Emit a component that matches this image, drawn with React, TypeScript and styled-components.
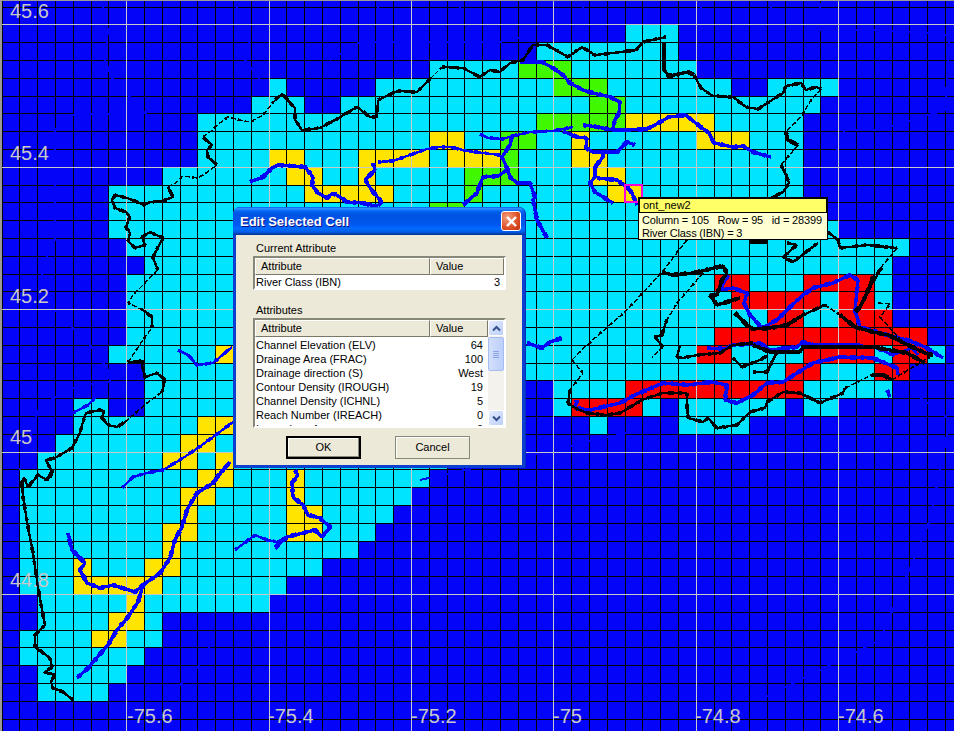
import React from 'react'
import styled, { createGlobalStyle } from 'styled-components'

const GlobalStyle = createGlobalStyle`
    html, body {
        margin: 0;
        padding: 0;
        background: #fff;
    }
`

const STEP = 17.8
const colX = (k: number) => Math.round(1.5 + STEP * k)
const rowY = (j: number) => Math.round(6.5 + STEP * j)

type Span = [number, number, number]

// [row, first column, last column]
const CYAN: Span[] = [
    [1, 35, 37], [2, 30, 37], [3, 24, 38], [4, 15, 15], [4, 21, 40], [4, 43, 46], [5, 14, 16], [5, 19, 45],
    [6, 11, 44], [7, 11, 44], [8, 11, 44], [9, 9, 44], [10, 6, 44], [11, 6, 44], [12, 6, 46], [13, 7, 50],
    [14, 8, 49], [15, 7, 49], [16, 7, 49], [17, 7, 49], [18, 7, 51], [19, 6, 52], [20, 8, 50], [21, 8, 28],
    [21, 31, 49], [22, 4, 5], [22, 8, 28], [22, 31, 36], [22, 38, 43], [22, 45, 46], [23, 4, 28], [23, 33, 33],
    [23, 38, 41], [24, 3, 28], [25, 2, 24], [26, 1, 23], [27, 1, 22], [28, 1, 21], [29, 1, 20], [30, 1, 19],
    [31, 1, 17], [32, 1, 15], [33, 2, 14], [34, 2, 8], [35, 1, 8], [36, 1, 7], [37, 2, 6], [38, 2, 5],
]
const YELLOW: Span[] = [
    [6, 35, 39], [7, 24, 25], [7, 32, 32], [7, 39, 41], [8, 15, 16], [8, 20, 23], [8, 25, 27], [8, 32, 33],
    [9, 16, 17], [9, 20, 20], [9, 33, 34], [10, 17, 21], [10, 34, 35], [19, 12, 12], [23, 11, 12], [24, 10, 11],
    [25, 9, 10], [25, 12, 12], [26, 11, 12], [26, 16, 16], [27, 10, 11], [27, 16, 16], [28, 10, 10], [28, 16, 17],
    [29, 9, 10], [29, 16, 17], [30, 9, 9], [31, 4, 4], [31, 8, 9], [32, 4, 8], [33, 7, 7], [34, 6, 7], [35, 5, 6],
]
const GREEN: Span[] = [
    [3, 29, 31], [4, 31, 33], [5, 33, 34], [6, 30, 34], [7, 28, 29], [8, 28, 28], [9, 26, 28], [10, 26, 26], [11, 24, 25],
]
const RED: Span[] = [
    [15, 40, 41], [15, 45, 48], [16, 41, 45], [16, 47, 48], [17, 43, 44], [17, 47, 49], [18, 40, 51], [19, 39, 40],
    [19, 45, 48], [19, 50, 51], [20, 44, 45], [20, 49, 50], [21, 35, 44], [22, 32, 35],
]

const CELL_LAYERS: { color: string, spans: Span[] }[] = [
    { color: '#00e4ff', spans: CYAN },
    { color: '#ffe400', spans: YELLOW },
    { color: '#40f800', spans: GREEN },
    { color: '#fc0000', spans: RED },
]

// breaks in the black grid, same colour as the water
const WATER_TRACES = [
    '102,3 108,30 105,60 112,78 145,113 100,114 75,114 55,130 55,240 40,270 55,310 90,345 108,370 110,382 80,385 40,405 20,470',
    '235,3 250,40 245,60 260,80',
    '330,60 360,42 500,42 530,35',
    '378,3 378,40', '460,3 460,40', '583,3 583,30', '700,3 703,20', '770,3 775,20',
    '820,3 820,30 880,30 950,35 945,110 880,130 845,130 830,165',
    '910,390 950,420 930,520 880,640 760,700',
    '213,640 198,667 182,683 163,700',
    '420,480 640,430',
]

// [points, stroke width]
const BOUNDARIES: [string, number][] = [
    ['73,700 63,692 53,688 51,682 55,674 44,673 52,667 50,658 42,652 35,647 35,635 45,625 42,610 38,587 33,553 28,527 23,497 22,482 24,478 28,487 38,475 47,480 52,470 50,478 52,472 46,460 55,458 72,448 80,433 82,425 86,413 100,410 104,411 102,418 108,425 117,427 125,422', 2],
    ['125,422 147,403 162,392', 1],
    ['162,392 165,380 157,373 145,377 142,365 144,361 128,362', 2],
    ['128,362 143,340 152,328', 1],
    ['152,328 152,317 143,310', 2],
    ['143,310 128,303 133,295 158,270', 1],
    ['158,270 153,258 155,253 162,240 163,238 150,232 142,237 145,245 135,248 128,241 130,233 126,227 130,217 126,212 115,208 112,200 115,195 127,198 137,202 144,205 150,202 163,201 173,197 168,187', 2],
    ['168,187 177,182 183,176 197,178 205,174 213,168 217,165', 1],
    ['217,165 208,157 207,150 212,145 203,137', 2],
    ['203,137 210,132 220,123 228,117 240,120 250,122 263,115 275,100', 1],
    ['275,100 282,94 295,108 295,120 302,130 320,128 335,120 357,107 370,117 377,117 378,100', 2],
    ['378,100 398,91 417,92 430,79', 2],
    ['430,79 442,67', 1],
    ['442,67 463,68 480,77 490,70 500,72 510,63 523,60 533,45 547,45 568,57 582,47 595,55 613,53 637,50', 2],
    ['636,50 643,42 666,37', 2],
    ['664,42 664,50 664,70 669,76 688,72 694,75', 3],
    ['694,75 701,88 713,96 733,97 746,107 758,109 783,93 786,86 801,83 806,90 816,87 821,89', 2],
    ['821,89 811,100 801,117 786,132', 1],
    ['786,132 788,140 798,145', 3],
    ['798,145 781,165', 1],
    ['781,165 786,175 789,183 783,192 773,197 760,205', 2],
    // east side, below the tip
    ['687,240 662,272 627,310 587,345 572,360', 1],
    ['572,360 583,373 570,390', 1],
    ['570,390 568,403 575,408 587,413 607,415 620,413 642,400 663,393 687,393', 2],
    ['687,393 687,405 688,418 703,422 708,418 717,428 737,425 750,412 765,408 767,402 783,392 800,393 820,403', 2],
    ['820,403 843,393 845,388', 2],
    ['845,388 872,375', 1],
    ['872,375 883,375 892,380', 3],
    ['892,380 908,370 933,355', 1],
    ['662,272 672,275 693,273 723,266 727,273 722,280 717,295 710,295 717,305 740,298', 3],
    ['703,273 677,303 667,320', 1],
    ['667,320 665,325 662,335 655,337 663,347', 2],
    ['663,347 652,357', 1],
    ['680,345 677,357 683,358 697,355 720,353 733,345 753,343', 2],
    ['733,358 742,367 760,360 768,355', 2],
    ['753,372 767,372 777,352', 2],
    ['753,345 770,352 800,352 803,347 857,347 873,347 890,350 907,353 925,363', 3],
    ['735,313 747,325 753,329 770,328 787,325 803,315', 3],
    ['803,315 825,305', 2],
    ['825,305 840,315', 1],
    ['840,315 855,327 873,332 888,335 908,345 925,353 933,355', 3],
    ['882,268 872,283 865,297 860,307', 2],
    ['878,303 890,304 880,317 905,345', 1],
    ['750,242 768,242', 3],
    ['787,243 797,245 783,257 793,262 818,243', 2],
    ['828,232 838,240 840,248 867,245 897,248', 2],
    ['897,248 873,277', 1],
    ['873,277 867,293 860,307 855,312', 3],
]

const RIVERS: [string, number][] = [
    ['520,62 542,62 553,68 563,75 570,83 583,90 593,93 610,97 620,102 619,113 615,120 613,128', 3],
    ['480,134 488,138 503,139 512,136 530,132 553,131 573,127', 2],
    ['583,125 597,127 613,130 627,130 647,129 653,126 669,117 686,115 698,125 709,133 714,143 733,147 743,146 753,152 771,157', 3],
    ['563,131 577,137 587,138 586,148 593,152 617,152 627,142 635,145', 3],
    ['603,152 603,157 595,167 595,177 590,183 595,192 603,197 613,203', 3],
    ['597,178 617,180 627,187 632,193 637,205', 3],
    ['250,182 263,177 272,168 278,165 293,166 305,167 313,177 312,185 318,193 327,198 333,193 340,197 347,202 363,203 378,207', 3],
    ['378,162 393,161 410,155 427,149 440,147 450,147 467,151 483,153 500,155', 2],
    ['373,163 375,170 365,180 373,192 382,202 378,206', 3],
    ['512,136 510,145 502,157 507,168 510,177 517,183 530,183 535,197 533,200 537,220 547,238', 3],
    ['507,170 498,176 483,177 479,187 477,193 463,205', 3],
    ['223,470 213,483 197,493 187,510 182,527 175,540 170,558 160,573 143,585 135,592 113,585 100,588 87,583 80,570 85,563 72,550 68,533', 3],
    ['143,585 138,602 128,617 117,630 108,645 101,653 88,668 77,678', 3],
    ['122,488 133,477 147,473 163,470 180,460 195,450 213,437 233,422', 2],
    ['217,477 230,462', 3],
    ['178,350 188,355 197,365 213,363 232,347', 2],
    ['73,413 88,405 95,398', 2],
    ['295,470 298,475 292,483 293,497 303,505 308,515 320,518 330,527 322,537 315,530 287,537 275,548', 3],
    ['235,550 255,535 267,540 277,542 287,537', 2],
    ['728,275 720,290 733,288 747,293 744,303 750,315 762,328', 3],
    ['762,328 777,320 787,310 803,295 813,288 833,283 850,275 858,280 855,310 860,327 887,335 907,340 925,347 943,358', 3],
    ['707,348 725,349 733,345 760,343 770,350 797,347 803,342 813,345 857,345', 3],
    ['857,345 873,347 893,355 912,348 918,355', 2],
    ['577,400 575,408 590,410 620,403 635,395 663,383 687,385 712,382 727,385 725,400 737,403 753,395 767,383 783,382 813,363 840,357 873,358 897,368 898,375', 3],
    ['527,343 542,348 550,342 562,338', 3],
    ['887,390 890,397', 3],
]

const LAT_LABELS: [string, number][] = [['45.6', 18], ['45.4', 160], ['45.2', 303], ['45', 444], ['44.8', 587]]
const LON_LABELS: [string, number][] = [['-75.6', 127], ['-75.4', 268], ['-75.2', 411], ['-75', 553], ['-74.8', 695], ['-74.6', 838]]

const ATTRIBUTES: [string, string][] = [
    ['Channel Elevation (ELV)', '64'],
    ['Drainage Area (FRAC)', '100'],
    ['Drainage direction (S)', 'West'],
    ['Contour Density (IROUGH)', '19'],
    ['Channel Density (ICHNL)', '5'],
    ['Reach Number (IREACH)', '0'],
    ['Impervious Area', '0'],
]

const isGraticule = (n: number, offset: number) => (n - offset) % 8 === 0

// a base line and a dashed heavier copy, so the trace looks blocky like the raster
const Traces: React.FC<{ lines: [string, number][], color: string }> = ({ lines, color }) => (
    <g fill="none" stroke={color} strokeLinejoin="bevel" shapeRendering="crispEdges">
        {lines.map(([points, width]) => (
            <React.Fragment key={points}>
                <polyline points={points} strokeWidth={width + 0.4} strokeDasharray={width === 1 ? '5 2' : undefined} />
                <polyline points={points} strokeWidth={width + 1.6} strokeDasharray={width === 1 ? '2 12' : '3 8 6 5'} />
            </React.Fragment>
        ))}
    </g>
)

const GridMap: React.FC = () => {
    const cols = Array.from({ length: 54 }, (_, k) => k)
    const rows = Array.from({ length: 41 }, (_, j) => j)

    return (
        <MapSvg width="954" height="731" viewBox="0 0 954 731">
            <rect x="0" y="0" width="954" height="731" fill="#0404f8" shapeRendering="crispEdges" />
            {CELL_LAYERS.map(layer => layer.spans.map(([row, from, to]) => (
                <rect
                    key={`${layer.color}-${row}-${from}`}
                    x={colX(from)}
                    y={rowY(row)}
                    width={colX(to + 1) - colX(from)}
                    height={rowY(row + 1) - rowY(row)}
                    fill={layer.color}
                    shapeRendering="crispEdges"
                />
            )))}
            <g stroke="#000" strokeWidth="1" shapeRendering="crispEdges">
                {cols.map(k => <line key={k} x1={colX(k) + 0.5} y1="0" x2={colX(k) + 0.5} y2="731" />)}
                {rows.map(j => <line key={j} x1="0" y1={rowY(j) + 0.5} x2="954" y2={rowY(j) + 0.5} />)}
            </g>
            <g fill="none" stroke="#0404f8" strokeWidth="2" shapeRendering="crispEdges">
                {WATER_TRACES.map(points => <polyline key={points} points={points} />)}
            </g>
            <g stroke="#c8c8c8" strokeWidth="1" shapeRendering="crispEdges">
                {cols.filter(k => isGraticule(k, 7)).map(k => <line key={k} x1={colX(k) + 0.5} y1="0" x2={colX(k) + 0.5} y2="731" />)}
                {rows.filter(j => isGraticule(j, 1)).map(j => <line key={j} x1="0" y1={rowY(j) + 0.5} x2="954" y2={rowY(j) + 0.5} />)}
            </g>
            <Traces lines={RIVERS} color="#0404f8" />
            <Traces lines={BOUNDARIES} color="#000" />
            <rect x="625" y="185" width="17" height="17" fill="none" stroke="#ff00d8" strokeWidth="2" shapeRendering="crispEdges" />
            <g fill="#c8c8c8" fontFamily="'Liberation Sans', Arial, sans-serif" fontSize="20">
                {LAT_LABELS.map(([label, y]) => <text key={label} x="10" y={y}>{label}</text>)}
                {LON_LABELS.map(([label, x]) => <text key={label} x={x} y="723">{label}</text>)}
            </g>
            <path d="M0 0H954V1H2V731H0Z" fill="#9a9a9a" shapeRendering="crispEdges" />
        </MapSvg>
    )
}

const ScrollArrow: React.FC<{ down?: boolean }> = ({ down }) => (
    <svg width="9" height="7" viewBox="0 0 9 7">
        <path d={down ? 'M1 1.5L4.5 5L8 1.5' : 'M1 5.5L4.5 2L8 5.5'} fill="none" stroke="#35508c" strokeWidth="2" />
    </svg>
)

export default function App() {
    return (
        <Screen>
            <GlobalStyle />
            <GridMap />

            <Tip>
                <TipTitle>ont_new2</TipTitle>
                <TipBody>
                    <TipLine>Column = 105   Row = 95   id = 28399</TipLine>
                    <TipLine>River Class (IBN) = 3</TipLine>
                </TipBody>
            </Tip>

            <Dialog>
                <TitleBar>
                    <Title>Edit Selected Cell</Title>
                    <CloseButton>
                        <svg width="13" height="13" viewBox="0 0 13 13">
                            <path d="M2 2L11 11M11 2L2 11" stroke="#fff" strokeWidth="2.4" />
                        </svg>
                    </CloseButton>
                </TitleBar>
                <Body>
                    <GroupLabel>Current Attribute</GroupLabel>
                    <ListFrame>
                        <HeaderRow>
                            <HeaderCell $width={175}>Attribute</HeaderCell>
                            <HeaderCell $width={74}>Value</HeaderCell>
                        </HeaderRow>
                        <Row $inset={4}>
                            <span>River Class (IBN)</span>
                            <span>3</span>
                        </Row>
                    </ListFrame>

                    <GroupLabel $top={13}>Attributes</GroupLabel>
                    <ListFrame $height={110}>
                        <ListColumn>
                            <HeaderRow>
                                <HeaderCell $width={175}>Attribute</HeaderCell>
                                <HeaderCell $width={58}>Value</HeaderCell>
                            </HeaderRow>
                            <Rows>
                                {ATTRIBUTES.map(([name, value]) => (
                                    <Row key={name} $inset={5}>
                                        <span>{name}</span>
                                        <span>{value}</span>
                                    </Row>
                                ))}
                            </Rows>
                        </ListColumn>
                        <ScrollBar>
                            <ScrollButton><ScrollArrow /></ScrollButton>
                            <ScrollTrack>
                                <ScrollThumb>
                                    <Grip /><Grip /><Grip /><Grip />
                                </ScrollThumb>
                            </ScrollTrack>
                            <ScrollButton><ScrollArrow down /></ScrollButton>
                        </ScrollBar>
                    </ListFrame>

                    <Buttons>
                        <PushButton $primary>OK</PushButton>
                        <PushButton>Cancel</PushButton>
                    </Buttons>
                </Body>
            </Dialog>
        </Screen>
    )
}

const Screen = styled.div`
    position: relative;
    width: 954px;
    height: 731px;
    overflow: hidden;
    font-family: "Liberation Sans", Arial, sans-serif;
    font-size: 11px;
    color: #000;
`

const MapSvg = styled.svg`
    display: block;
`

const Tip = styled.div`
    position: absolute;
    left: 638px;
    top: 197px;
    width: 190px;
    height: 43px;
    box-sizing: border-box;
    border: 1px solid #000;
    background: #ffffd2;
    display: flex;
    flex-direction: column;
`

const TipTitle = styled.div`
    height: 15px;
    flex: none;
    box-sizing: border-box;
    padding-left: 3px;
    line-height: 13px;
    overflow: hidden;
    background: #ffff66;
    border: 1px solid #000;
`

const TipBody = styled.div`
    padding: 1px 0 0 3px;
`

const TipLine = styled.div`
    height: 13px;
    line-height: 13px;
    white-space: pre;
    letter-spacing: -0.16px;
`

const Dialog = styled.div`
    position: absolute;
    left: 233px;
    top: 207px;
    width: 293px;
    height: 261px;
    box-sizing: border-box;
    display: flex;
    flex-direction: column;
    background: #0a3fd0;
    border-radius: 7px 7px 0 0;
    padding: 0 3px 3px 3px;
    border-right: 1px solid #0030b8;
`

const TitleBar = styled.div`
    height: 28px;
    margin: 0 -3px;
    padding: 0 4px 0 7px;
    flex: none;
    display: flex;
    align-items: center;
    justify-content: space-between;
    border-radius: 7px 7px 0 0;
    background: linear-gradient(#0058ee 0%, #3593ff 6%, #127dff 10%, #0262ee 16%, #0054e3 26%, #0055eb 56%, #005bf5 66%, #026afe 76%, #0062ef 86%, #0052d6 92%, #0040ab 96%, #003092 100%);
`

const Title = styled.span`
    font-family: "Liberation Sans", Arial, sans-serif;
    font-weight: 700;
    font-size: 13px;
    color: #fff;
    text-shadow: 1px 1px #0f1089;
`

const CloseButton = styled.div`
    width: 20px;
    height: 20px;
    box-sizing: border-box;
    display: flex;
    align-items: center;
    justify-content: center;
    border: 1px solid #fff;
    border-radius: 3px;
    background: radial-gradient(circle at 30% 30%, #f0a080, #e0552c 55%, #c0300f);
`

const Body = styled.div`
    flex: 1;
    min-height: 0;
    display: flex;
    flex-direction: column;
    padding: 6px 19px 0 17px;
    background-color: #ece9d8;
    background-image: radial-gradient(#f6f3e6 0.6px, transparent 0.7px);
    background-size: 4px 4px;
`

const GroupLabel = styled.div<{ $top?: number }>`
    height: 14px;
    line-height: 14px;
    margin: ${p => p.$top ?? 0}px 0 1px 3px;
    flex: none;
`

const ListFrame = styled.div<{ $height?: number }>`
    width: 253px;
    height: ${p => p.$height ?? 34}px;
    flex: none;
    box-sizing: border-box;
    display: flex;
    flex-direction: ${p => (p.$height ? 'row' : 'column')};
    overflow: hidden;
    background: #fff;
    border: 2px solid;
    border-color: #888878 #fff #fff #888878;
`

const ListColumn = styled.div`
    flex: 1;
    min-width: 0;
    display: flex;
    flex-direction: column;
`

const HeaderRow = styled.div`
    display: flex;
    flex: none;
    height: 17px;
`

const HeaderCell = styled.div<{ $width: number }>`
    width: ${p => p.$width}px;
    box-sizing: border-box;
    padding-left: 5px;
    line-height: 15px;
    background: #ece9d8;
    border: 1px solid;
    border-color: #fff #7a7868 #7a7868 #fff;
`

const Rows = styled.div`
    flex: 1;
    min-height: 0;
    overflow: hidden;
    padding-top: 1px;
`

const Row = styled.div<{ $inset: number }>`
    display: flex;
    justify-content: space-between;
    height: 14px;
    line-height: 14px;
    flex: none;
    padding: 0 ${p => p.$inset}px 0 1px;
`

const ScrollBar = styled.div`
    width: 16px;
    flex: none;
    display: flex;
    flex-direction: column;
    background: #f3f2ec;
`

const ScrollButton = styled.div`
    height: 16px;
    flex: none;
    box-sizing: border-box;
    display: flex;
    align-items: center;
    justify-content: center;
    border: 1px solid #fff;
    border-radius: 2px;
    background: linear-gradient(135deg, #e4ecfd, #bccffa);
`

const ScrollTrack = styled.div`
    flex: 1;
    min-height: 0;
    padding-top: 1px;
`

const ScrollThumb = styled.div`
    height: 34px;
    box-sizing: border-box;
    display: flex;
    flex-direction: column;
    align-items: center;
    justify-content: center;
    gap: 1px;
    border: 1px solid #a5bdf0;
    border-radius: 2px;
    background: linear-gradient(90deg, #d2dffb, #bdcffa);
`

const Grip = styled.div`
    width: 6px;
    height: 1px;
    background: #8aa6e8;
`

const Buttons = styled.div`
    display: flex;
    gap: 34px;
    margin: 8px 0 0 33px;
`

const PushButton = styled.div<{ $primary?: boolean }>`
    width: 75px;
    height: 23px;
    box-sizing: border-box;
    text-align: center;
    line-height: ${p => (p.$primary ? '19px' : '21px')};
    background: #ece9d8;
    border: ${p => (p.$primary ? '2px solid #000' : '1px solid #888878')};
    box-shadow: ${p => (p.$primary ? 'inset -1px -1px #888878, inset 1px 1px #fff' : 'inset 1px 1px #fff')};
`
